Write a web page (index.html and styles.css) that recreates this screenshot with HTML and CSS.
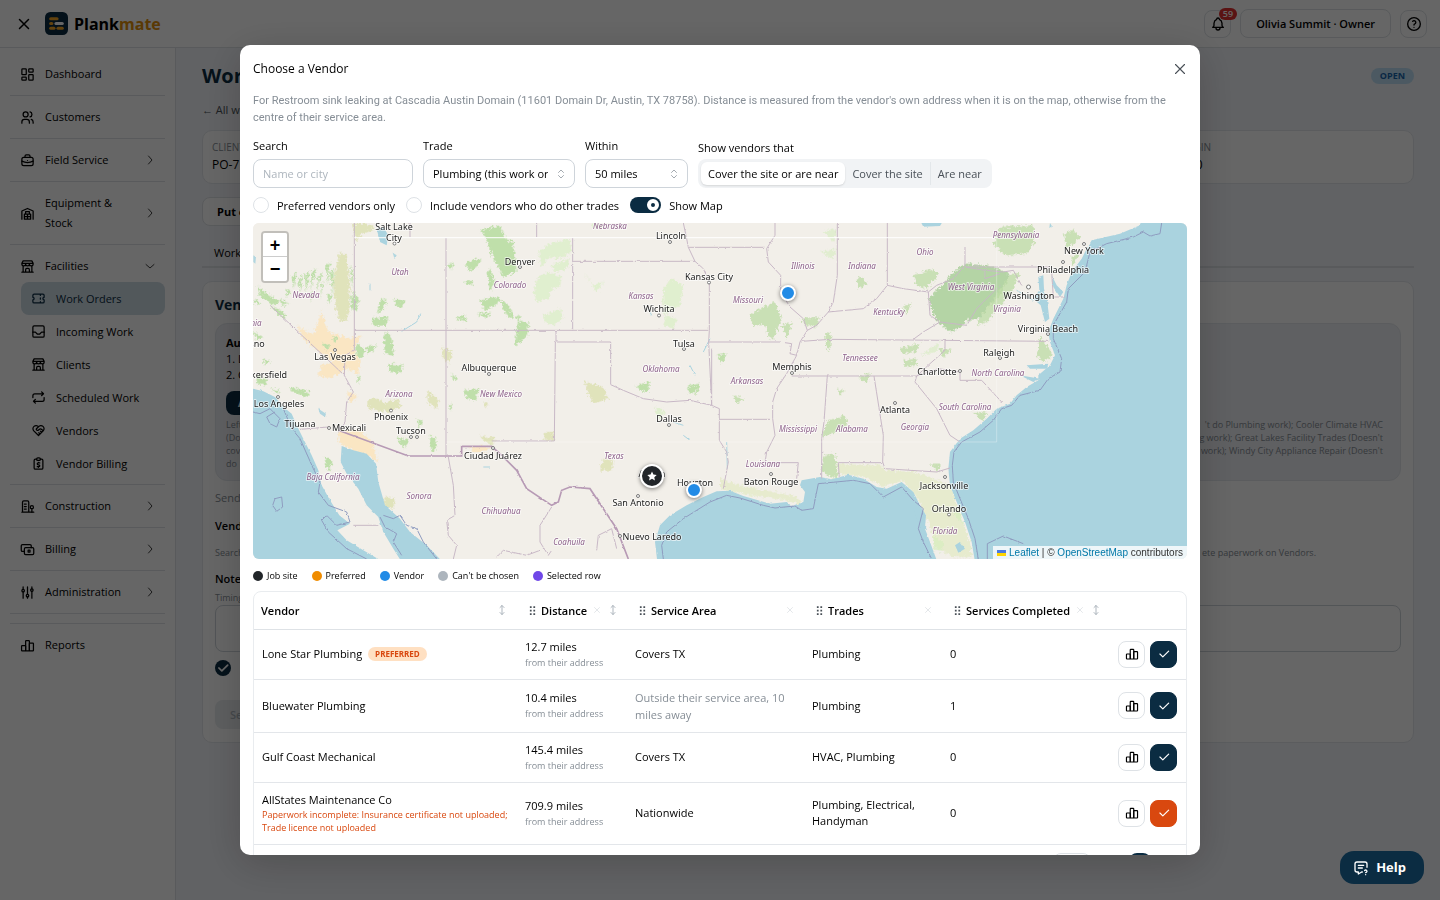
FILE: index.html
```html
<!DOCTYPE html>
<html lang="en">
<head>
<meta charset="utf-8">
<meta name="viewport" content="width=device-width, initial-scale=1">
<title>Plankmate - Work Order</title>
<link rel="stylesheet" href="styles.css">
</head>
<body>
<svg class="defs" aria-hidden="true">
  <symbol id="i-x" viewBox="0 0 24 24"><path d="M18 6 6 18M6 6l12 12"/></symbol>
  <symbol id="i-dash" viewBox="0 0 24 24"><rect x="3" y="3" width="7" height="9" rx="1"/><rect x="3" y="16" width="7" height="5" rx="1"/><rect x="14" y="12" width="7" height="9" rx="1"/><rect x="14" y="3" width="7" height="5" rx="1"/></symbol>
  <symbol id="i-users" viewBox="0 0 24 24"><circle cx="9" cy="7" r="4"/><path d="M3 21v-2a4 4 0 0 1 4-4h4a4 4 0 0 1 4 4v2M16 3.1a4 4 0 0 1 0 7.8M21 21v-2a4 4 0 0 0-3-3.9"/></symbol>
  <symbol id="i-case" viewBox="0 0 24 24"><rect x="3" y="7" width="18" height="13" rx="3"/><path d="M8 7V5a2 2 0 0 1 2-2h4a2 2 0 0 1 2 2v2M12 12v.01M3 13a20 20 0 0 0 18 0"/></symbol>
  <symbol id="i-ware" viewBox="0 0 24 24"><path d="M3 21V8l9-4 9 4v13M7 21v-8h10v8H7M7 17h10M12 13v8M9 13V9h6v4"/></symbol>
  <symbol id="i-store" viewBox="0 0 24 24"><path d="M3 21h18M3 7v1a3 3 0 0 0 6 0V7m0 1a3 3 0 0 0 6 0V7m0 1a3 3 0 0 0 6 0V7H3l2-4h14l2 4M5 21V10.9M19 21V10.9M9 21v-4a2 2 0 0 1 2-2h2a2 2 0 0 1 2 2v4"/></symbol>
  <symbol id="i-ticket" viewBox="0 0 24 24"><path d="M15 5v2M15 11v2M15 17v2M5 5h14a2 2 0 0 1 2 2v3a2 2 0 0 0 0 4v3a2 2 0 0 1-2 2H5a2 2 0 0 1-2-2v-3a2 2 0 0 0 0-4V7a2 2 0 0 1 2-2"/></symbol>
  <symbol id="i-inbox" viewBox="0 0 24 24"><rect x="3" y="3" width="18" height="18" rx="2"/><path d="M3 13h4l3 3h4l3-3h4"/></symbol>
  <symbol id="i-repeat" viewBox="0 0 24 24"><path d="M3 12V9a3 3 0 0 1 3-3h14m-3-3 3 3-3 3M21 12v3a3 3 0 0 1-3 3H4m3 3-3-3 3-3"/></symbol>
  <symbol id="i-heart" viewBox="0 0 24 24"><path d="M19.5 12.6 12 20l-7.500-7.400A5 5 0 1 1 12 6a5 5 0 1 1 7.500 6.600M12 6 8.700 9.300a1 1 0 0 0 0 1.400l.6.6a2 2 0 0 0 2.700 0l1-1a3 3 0 0 1 4.200 0l2.300 2.300M12.500 15.500l2 2M15 13l2 2"/></symbol>
  <symbol id="i-bill" viewBox="0 0 24 24"><path d="M9 5H7a2 2 0 0 0-2 2v12a2 2 0 0 0 2 2h10a2 2 0 0 0 2-2V7a2 2 0 0 0-2-2h-2"/><rect x="9" y="3" width="6" height="4" rx="2"/><path d="M14 11h-2.500a1.500 1.500 0 0 0 0 3h1a1.500 1.500 0 0 1 0 3H10M12 17v1m0-8v1"/></symbol>
  <symbol id="i-build" viewBox="0 0 24 24"><path d="M3 21h19M4 21V5a2 2 0 0 1 2-2h6a2 2 0 0 1 2 2v16M7 8h3M7 12h3M7 16h3"/><circle cx="19" cy="13" r="2.500"/><path d="M19 16v5"/></symbol>
  <symbol id="i-cash" viewBox="0 0 24 24"><rect x="7" y="9" width="15" height="11" rx="2"/><path d="M18 9V6a2 2 0 0 0-2-2H4a2 2 0 0 0-2 2v7a2 2 0 0 0 2 2h3"/><rect x="13" y="13" width="3" height="3"/></symbol>
  <symbol id="i-adj" viewBox="0 0 24 24"><circle cx="5" cy="9" r="2"/><circle cx="12" cy="17" r="2"/><circle cx="19" cy="8" r="2"/><path d="M5 3v4M5 11v10M12 3v12M12 19v2M19 3v3M19 10v11"/></symbol>
  <symbol id="i-chart" viewBox="0 0 24 24"><rect x="2.500" y="12" width="6.500" height="8.500" rx="1"/><rect x="9" y="4" width="6" height="16.500" rx="1"/><rect x="15" y="8" width="6.500" height="12.500" rx="1"/></symbol>
  <symbol id="i-right" viewBox="0 0 24 24"><path d="m9 4 7 8-7 8"/></symbol>
  <symbol id="i-down" viewBox="0 0 24 24"><path d="m4 9 8 7 8-7"/></symbol>
  <symbol id="i-bell" viewBox="0 0 24 24"><path d="M10 5a2 2 0 1 1 4 0 7 7 0 0 1 4 6v3a4 4 0 0 0 2 3H4a4 4 0 0 0 2-3v-3a7 7 0 0 1 4-6M9 17v1a3 3 0 0 0 6 0v-1"/></symbol>
  <symbol id="i-help" viewBox="0 0 24 24"><circle cx="12" cy="12" r="9.500"/><path d="M12 17v.01M12 13.500a1.500 1.500 0 0 1 1-1.500 2.600 2.600 0 1 0-3-4"/></symbol>
  <symbol id="i-check" viewBox="0 0 24 24"><path d="m5 12 5 5L20 7"/></symbol>
  <symbol id="i-updown" viewBox="0 0 24 24"><path d="m7 9 5-5 5 5M7 15l5 5 5-5"/></symbol>
  <symbol id="i-sort" viewBox="0 0 24 24"><path d="m8 7 4-4 4 4M8 17l4 4 4-4M12 3v18"/></symbol>
  <symbol id="i-grip" viewBox="0 0 8 10"><path d="M1 0h2v2H1zM5 0h2v2H5zM1 4h2v2H1zM5 4h2v2H5zM1 8h2v2H1zM5 8h2v2H5z"/></symbol>
  <symbol id="i-chat" viewBox="0 0 24 24"><path d="M8 8h8M8 12h6M14 18h-1l-5 3v-3H6a3 3 0 0 1-3-3V6a3 3 0 0 1 3-3h12a3 3 0 0 1 3 3v5M19 22v.01M19 19a2 2 0 0 0 1-3.700 2 2 0 0 0-2.500.4"/></symbol>
</svg>

<header class="topbar">
  <button class="plain" aria-label="Close menu"><svg class="ic ic-18"><use href="#i-x"/></svg></button>
  <a class="brand" href="#">
    <svg class="brand-mark" viewBox="0 0 22 22"><rect width="22" height="22" rx="5" fill="#0b2c42"/><rect x="4" y="5" width="9" height="3" rx="1.500" fill="#f5a623"/><rect x="9" y="9.500" width="9" height="3" rx="1.500" fill="#fff"/><rect x="4" y="9.500" width="4" height="3" rx="1.500" fill="#f5a623"/><rect x="4" y="14" width="6" height="3" rx="1.500" fill="#f5a623"/><rect x="11" y="14" width="7" height="3" rx="1.500" fill="#f5a623"/></svg>
    <span>Plank<span class="brand-b">mate</span></span>
  </a>
  <div class="top-actions">
    <button class="sq" aria-label="Notifications"><svg class="ic ic-16"><use href="#i-bell"/></svg><span class="count">59</span></button>
    <button class="user">Olivia Summit · Owner</button>
    <button class="sq" aria-label="Help"><svg class="ic ic-16"><use href="#i-help"/></svg></button>
  </div>
</header>

<div class="shell">
  <nav class="side">
    <a class="nav" href="#"><svg class="ic ic-15"><use href="#i-dash"/></svg><span>Dashboard</span></a>
    <a class="nav" href="#"><svg class="ic ic-15"><use href="#i-users"/></svg><span>Customers</span></a>
    <a class="nav strong" href="#"><svg class="ic ic-15"><use href="#i-case"/></svg><span>Field Service</span><svg class="ic ic-12 chev"><use href="#i-right"/></svg></a>
    <a class="nav strong" href="#"><svg class="ic ic-15"><use href="#i-ware"/></svg><span>Equipment &amp; Stock</span><svg class="ic ic-12 chev"><use href="#i-right"/></svg></a>
    <div class="nav-group">
      <a class="nav strong open" href="#"><svg class="ic ic-15"><use href="#i-store"/></svg><span>Facilities</span><svg class="ic ic-12 chev"><use href="#i-down"/></svg></a>
      <a class="sub active" href="#"><svg class="ic ic-15"><use href="#i-ticket"/></svg>Work Orders</a>
      <a class="sub" href="#"><svg class="ic ic-15"><use href="#i-inbox"/></svg>Incoming Work</a>
      <a class="sub" href="#"><svg class="ic ic-15"><use href="#i-store"/></svg>Clients</a>
      <a class="sub" href="#"><svg class="ic ic-15"><use href="#i-repeat"/></svg>Scheduled Work</a>
      <a class="sub" href="#"><svg class="ic ic-15"><use href="#i-heart"/></svg>Vendors</a>
      <a class="sub" href="#"><svg class="ic ic-15"><use href="#i-bill"/></svg>Vendor Billing</a>
    </div>
    <a class="nav strong" href="#"><svg class="ic ic-15"><use href="#i-build"/></svg><span>Construction</span><svg class="ic ic-12 chev"><use href="#i-right"/></svg></a>
    <a class="nav strong" href="#"><svg class="ic ic-15"><use href="#i-cash"/></svg><span>Billing</span><svg class="ic ic-12 chev"><use href="#i-right"/></svg></a>
    <a class="nav strong" href="#"><svg class="ic ic-15"><use href="#i-adj"/></svg><span>Administration</span><svg class="ic ic-12 chev"><use href="#i-right"/></svg></a>
    <a class="nav last" href="#"><svg class="ic ic-15"><use href="#i-chart"/></svg><span>Reports</span></a>
  </nav>

  <main class="page">
    <div class="page-head"><h1>Work Order</h1><span class="pill-open">OPEN</span></div>
    <a class="back" href="#">← All work orders</a>
    <section class="card facts">
      <div><span class="cap">CLIENT PO</span><span class="val">PO-7</span></div><div></div><div></div><div></div>
      <div><span class="cap">MARGIN</span><span class="val">$0.00</span></div>
    </section>
    <button class="hold">Put on hold</button>
    <div class="tabs"><a href="#">Work</a></div>
    <section class="card vend">
      <h2>Vendor</h2>
      <div class="auto">
        <strong>Auto</strong>
        <span>1. L</span>
        <span>2. C</span>
        <button class="mini">A</button>
        <p class="fine"><span>Left out</span><span>'t do Plumbing work); Cooler Climate HVAC</span></p>
        <p class="fine"><span>(Doesn't</span><span>g work); Great Lakes Facility Trades (Doesn't</span></p>
        <p class="fine"><span>cover</span><span>work); Windy City Appliance Repair (Doesn't</span></p>
        <p class="fine"><span>do</span></p>
      </div>
      <p class="send">Send</p>
      <p class="lab">Vendor</p>
      <p class="fine search-note"><span>Search</span><span>ete paperwork on Vendors.</span></p>
      <label class="lab" for="note">Notes</label>
      <p class="fine timing">Timing</p>
      <textarea id="note" class="note"></textarea>
      <span class="tick"><input type="checkbox" checked aria-label="Notify vendor"><svg class="ic ic-14"><use href="#i-check"/></svg></span>
      <button class="send-btn" disabled>Send</button>
    </section>
  </main>
</div>

<div class="overlay">
<div class="dialog" role="dialog" aria-modal="true" aria-labelledby="dlg-title">
  <div class="dlg-head"><h2 id="dlg-title">Choose a Vendor</h2><button class="plain grey" aria-label="Close"><svg class="ic ic-18"><use href="#i-x"/></svg></button></div>
  <p class="intro">For Restroom sink leaking at Cascadia Austin Domain (11601 Domain Dr, Austin, TX 78758). Distance is measured from the vendor's own address when it is on the map, otherwise from the centre of their service area.</p>

  <div class="filters">
    <div class="field w-search"><label for="q">Search</label><input id="q" type="text" placeholder="Name or city"></div>
    <div class="field w-trade"><label for="trade">Trade</label><div class="sel"><select id="trade"><option>Plumbing (this work order)</option></select><svg class="ic ic-12"><use href="#i-updown"/></svg></div></div>
    <div class="field w-within"><label for="within">Within</label><div class="sel"><select id="within"><option>50 miles</option></select><svg class="ic ic-12"><use href="#i-updown"/></svg></div></div>
    <fieldset class="seg-field"><legend>Show vendors that</legend>
      <div class="seg">
        <label><input type="radio" name="cov" checked><span>Cover the site or are near</span></label>
        <label><input type="radio" name="cov"><span>Cover the site</span></label>
        <label><input type="radio" name="cov"><span>Are near</span></label>
      </div>
    </fieldset>
  </div>
  <div class="toggles">
    <label><input class="round" type="checkbox">Preferred vendors only</label>
    <label><input class="round" type="checkbox">Include vendors who do other trades</label>
    <label><input class="switch" type="checkbox" role="switch" checked>Show Map</label>
  </div>

  <div class="map">
    <svg class="map-svg" viewBox="253 223 934 336" preserveAspectRatio="xMidYMid slice" role="img" aria-label="Vendor map">
      <defs>
        <filter id="rough" x="-5%" y="-5%" width="110%" height="110%"><feTurbulence type="fractalNoise" baseFrequency=".12" numOctaves="3" seed="4"/><feDisplacementMap in="SourceGraphic" scale="20" xChannelSelector="R" yChannelSelector="G"/></filter>
        <filter id="coast" x="-5%" y="-5%" width="110%" height="110%"><feTurbulence type="fractalNoise" baseFrequency=".08" numOctaves="2" seed="9"/><feDisplacementMap in="SourceGraphic" scale="7" xChannelSelector="R" yChannelSelector="G"/></filter>
      </defs>
      <rect x="253" y="223" width="934" height="336" fill="#f2efe9"/>
      <g transform="translate(250 222) scale(.33333)">
        <g filter="url(#rough)" opacity=".9">
          <g fill="#fbe3b6">
            <path d="M140 310 190 340 215 265 235 330 300 350 335 340 310 380 330 420 325 455 290 440 240 470 205 460 215 430 250 420 200 385 160 350zM265 625 330 625 365 660 385 720 350 700 310 685 268 665zM290 510 325 520 300 545zM660 675 715 670 710 688 670 690z" opacity=".85"/>
          </g>
          <g fill="#d6dca0">
            <path d="M268 90 290 100 300 200 295 290 270 300 258 260 250 180zM305 5 350 5 375 20 330 40 320 60zM690 640 735 650 728 670 705 660zM1005 480 1060 495 1075 530 1030 545 1015 515zM880 630 912 630 912 656 885 652zM1060 710 1090 715 1085 745 1050 745zM405 825 435 830 430 860 400 855zM355 530 385 530 400 545 440 530 455 555 415 570 355 560zM530 505 565 530 560 560 535 545zM700 540 715 540 710 560zM575 375 605 390 600 425 580 410z" opacity=".7"/>
          </g>
          <g fill="#b9dda3">
            <path d="M690 25 750 10 770 55 790 60 800 150 760 165 730 110 705 45zM645 125 675 110 695 115 660 150zM710 150 720 140 735 180 720 210zM615 290 640 275 655 300zM690 235 740 225 780 255 790 290 770 280 750 240 705 265zM810 295 835 305 830 345 795 370 800 320zM640 505 690 500 675 535 650 530zM680 275 720 272 710 290zM800 280 815 285 800 300zM640 180 670 175 665 190zM590 130 610 120 605 145zM410 330 425 350 430 400 405 395 400 350zM415 425 460 430 450 455 420 450zM325 455 332 480 322 480zM345 375 380 370 360 395zM120 495 180 510 170 525 125 510zM20 460 50 470 45 490 20 485zM60 500 90 505 80 515zM225 705 248 715 240 745 225 730zM595 550 606 545 604 565zM605 455 620 470 610 480zM300 220 325 230 320 265 305 260zM250 340 262 350 252 365zM390 235 410 230 400 260 380 275zM435 230 465 240 455 255 435 250zM365 290 415 285 410 310 370 312zM320 365 345 385 335 410 318 400zM215 360 240 372 230 385zM500 590 520 600 505 620zM440 645 480 655 460 680zM540 640 560 650 555 690 540 680z"/>
            <path d="M125 165 140 150 130 200zM145 175 158 160 150 210zM165 160 178 145 168 215zM185 150 198 140 182 205zM205 165 218 150 200 210zM228 130 240 120 232 190zM215 185 222 180 210 230zM240 150 252 140 248 220zM110 200 122 210 108 225zM300 130 310 150 308 200zM180 215 190 205 182 240zM232 215 245 220 236 250zM310 200 322 230 315 270zM20 190 45 210 90 240 70 250 30 220zM60 250 100 270 110 290 80 275zM10 230 30 240 20 250zM10 330 40 345 20 355zM90 230 115 245 95 252zM40 410 60 420 45 430z"/>
          </g>
          <g fill="#cdeeb3">
            <path d="M865 90 900 65 960 50 965 90 930 110 900 105 875 135zM865 165 895 150 935 165 930 195 905 200 895 230 860 240 850 210zM880 280 930 260 940 290 910 310 885 300zM900 130 960 110 950 140 920 150zM1240 200 1265 170 1300 190 1290 250 1240 280zM1250 280 1280 290 1270 320 1240 310zM1000 150 1030 190 1060 180 1040 210zM1025 5 1060 5 1060 20 1030 18zM1215 555 1245 565 1235 590 1220 580z" opacity=".55"/>
          </g>
          <g transform="translate(1410 0)" fill="#b9d9a0">
            <path fill="#add19e" d="M625 230 660 195 700 150 735 125 800 130 850 145 870 160 840 220 800 260 780 290 740 295 720 320 690 330 645 290z"/>
            <path d="M840 15 940 10 945 60 920 95 860 100 820 70zM870 160 900 150 880 200 850 240 800 300 770 310 790 270zM1030 40 1060 20 1080 50 1040 80zM580 160 640 140 655 160 620 200 590 190zM410 170 430 165 440 185 415 200zM90 280 120 260 165 240 185 290 160 350 145 345 140 310 100 310zM185 310 220 300 200 350zM240 290 300 285 290 315 260 310zM315 330 335 335 330 385 318 375zM540 380 600 365 590 390 545 395zM550 415 590 410 590 430 555 435zM655 380 695 380 670 410zM415 465 450 455 440 485zM0 405 18 410 0 425zM325 595 375 580 385 605 330 640 305 640zM310 700 345 695 355 770 330 765 305 745zM760 570 800 570 790 600zM630 725 660 725 655 750zM40 520 75 530 50 545zM960 340 1000 400 970 420 950 400zM1050 110 1080 90 1060 130zM545 260 575 240 560 275zM350 500 375 505 360 520z" opacity=".8"/>
            <path fill="#dfe9bb" d="M350 725 480 730 500 745 590 750 640 770 690 790 720 880 750 960 755 1005 700 1005 650 980 625 900 600 840 550 775 490 795 430 765 360 755zM0 770 60 790 160 810 230 825 250 850 200 835 60 815 0 800z" opacity=".65"/>
            <path fill="#cdeeb3" d="M640 940 670 960 665 990 640 985zM700 860 720 870 735 910 710 890zM300 90 350 80 340 110zM310 30 350 20 340 60zM600 400 660 360 650 390z" opacity=".5"/>
          </g>
          <path transform="translate(-150 0)" fill="#b9dda3" d="M1550 400 1580 395 1570 420zM1310 490 1350 480 1345 510 1320 505zM1465 490 1500 485 1490 515 1465 510z"/>
        </g>

        <g filter="url(#coast)">
          <g fill="#aad3df">
            <path d="M0 498 40 508 75 525 100 555 125 575 140 610 160 650 185 700 205 745 215 790 240 835 268 880 300 905 262 925 290 955 340 985 400 1020H0z"/>
            <path d="M275 672 310 685 350 695 378 725 385 780 405 850 450 890 480 930 530 970 578 1020H455L430 980 400 930 385 885 350 850 325 800 290 755 272 720z"/>
            <path d="M1222 1020 1215 960 1230 910 1260 880 1310 850 1360 825 1400 808 1440 806 1480 822 1560 845 1610 840 1625 852 1660 840 1665 810 1650 790 1655 775 1710 765 1745 772 1795 758 1840 770 1880 795 1910 800 1955 780 1990 810 2010 850 2028 880 2025 920 2040 960 2062 1020z"/>
            <path d="M2175 1020 2165 960 2145 900 2120 840 2100 790 2095 740 2100 690 2130 650 2170 625 2210 590 2240 560 2280 545 2300 520 2330 495 2365 475 2365 460 2400 430 2415 400 2400 360 2395 330 2410 290 2440 230 2450 190 2465 150 2495 110 2510 80 2525 55 2610 35 2670 10 2675-10H2830V1020z"/>
            <path d="M2010-5H2080L2070 12 2020 14zM380 20 400 15 415 40 410 70 390 60zM2400 3l6 10-8 5z"/>
            <path d="M2365 165 2380 160 2382 200 2392 240 2398 290 2385 300 2372 250 2350 230 2368 205zM2405 160 2420 190 2440 210 2430 225 2410 195zM2330 430 2395 425 2390 440 2340 440zM2310 460 2370 470 2350 480zM2115 970 2130 960 2145 980 2125 992z"/>
            <path d="M10 100 18 105 16 125 10 120zM205 560 228 575 225 585 210 575zM428 92 440 100 434 112z" opacity=".9"/>
          </g>
          <path class="river" d="M455 328 500 300 512 275M360 185v20M1320 430l15 30M1360 390l20-40M1195 260l10 20M1270 600l30 10M1300 640l20 15M700 735h20M2350 235 2300 205M1430 660 1432 740M1990 860l20 60"/>
        </g>
        <g class="offshore" filter="url(#coast)">
          <path d="M9 570 30 575 60 560 90 590 80 615 60 605 50 585 75 570M100 560 125 620 150 650 190 740 210 780 205 810 235 850 290 870 300 900 260 910 230 880 215 895 235 930 290 980 350 1011M75 830 95 825 98 855 80 868 68 850zM390 885 405 915 440 935 430 960 455 1000M400 880 430 890 450 880 470 910 500 920 520 960 560 1011"/>
          <path d="M1240 1011 1235 970 1250 930 1300 890 1380 840 1430 820 1470 828 1540 850 1575 858 1635 852 1655 865 1690 860 1705 785 1810 775 1860 785 1900 825 1955 795 1990 835 2020 860 2005 920 2020 960 2045 1011M2185 1011 2175 950 2155 890 2130 830 2110 780 2107 730 2112 690 2135 660 2190 630 2230 595 2255 560 2285 550 2310 520 2370 505 2395 470 2430 450 2435 410 2410 350 2410 310 2450 240 2455 200 2505 150 2520 90 2570 65 2650 45 2680 30 2700 42 2730 35 2735 3M2212 1011 2212 965 2260 942 2320 965"/>
        </g>
        <g class="state" filter="url(#coast)">
          <path d="M313 3V325M313 325H1375M588 48V700M313 325V385L285 400 283 460 310 510 290 540 285 600 265 625M60 250 283 460M480 45V3M860 3V45M968 48V325M970 118H1335L1360 140 1378 180V325L1376 360H1590M918 325V360M916 360 913 657H725M916 360H1082V488L1120 505 1180 530 1250 540 1320 535 1385 550V380M1376 360 1385 550 1408 560V655L1430 690 1435 720 1420 800M1408 592H1560M1300 3 1308 40 1315 76H1545M1315 76 1335 118M1575 3 1575 40 1550 80 1555 120 1592 160 1592 210 1620 255 1660 290 1672 325 1650 360 1640 400 1610 455 1580 500 1568 540 1568 590 1575 640 1550 690 1545 722H1645L1640 770M1762 3V160L1750 240 1735 270 1700 310 1672 325M1912 3V190L1880 230 1840 260 1735 270M1912 190 1960 200 2035 210 2060 190 2110 170 2145 130V75M2145 135H2400M2145 135 2205 145 2260 150 2290 145 2315 190M2205 145V170L2250 155M2035 210 2040 280 2070 300 2020 330 1990 352M1655 358 1740 352 2075 355 2395 358M1605 362 1625 365 1620 395 1640 400M1625 462H2000L2040 425 2085 385 2085 355M1732 462 1722 600 1715 650V770M1872 462 1900 640 1898 720 1905 740 2060 750 2100 738M1898 722H1765L1768 768M2000 462 1995 480 2060 560 2100 640 2130 660M2000 462 2065 440 2130 450V475H2195L2255 540M2070 300 2150 310 2180 260 2250 190M2405 150 2410 225H2445M150 622 235 615M310 910H385"/>
          <path d="M595 705 610 790 615 880 590 895 595 940 620 970 610 1011M905 855 870 910 870 960 895 1000 905 985M740 1005 760 985 830 1000 870 985M1040 985 1045 940 1085 920 1100 980"/>
        </g>
        <path class="country" filter="url(#coast)" d="M265 625 475 702H635V673H725L755 700 800 745 830 800 905 850 925 840 935 805 960 795 1020 800 1060 860 1100 920 1135 1011"/>
        <path d="M313 47H2290" stroke="#fff" stroke-width="4" opacity=".8"/>
        <path d="M590 660H2240V47" stroke="#fff" stroke-width="3" opacity=".3" fill="none"/>
      </g>
      <g class="town">
        <circle cx="394.500" cy="243.500" r="1.500"/><circle cx="520" cy="267" r="1.500"/><circle cx="670" cy="242" r="1.500"/><circle cx="709" cy="282.500" r="1.500"/><circle cx="659" cy="315.500" r="1.500"/><circle cx="335" cy="350" r="1.500"/><circle cx="684" cy="349" r="1.500"/><circle cx="489" cy="374" r="1.500"/><circle cx="278" cy="397" r="1.500"/><circle cx="391" cy="410.500" r="1.500"/><circle cx="329" cy="428" r="1.500"/><circle cx="411" cy="437" r="1.500"/><circle cx="417" cy="437" r="1.500"/><circle cx="669" cy="425" r="1.500"/><circle cx="493" cy="448" r="1.500"/><circle cx="638" cy="496" r="1.500"/><circle cx="620" cy="536" r="1.500"/><circle cx="792" cy="373" r="1.500"/><circle cx="895" cy="403" r="1.500"/><circle cx="771" cy="474" r="1.500"/><circle cx="945" cy="477" r="1.500"/><circle cx="949" cy="514.500" r="1.500"/><circle cx="960" cy="371" r="1.500"/><circle cx="1000" cy="358" r="1.500"/><circle cx="1048" cy="334" r="1.500"/><circle cx="1084" cy="244" r="1.500"/><circle cx="1063" cy="262" r="1.500"/><circle cx="1028.500" cy="287" r="2"/>
      </g>
      <g class="region">
        <text x="306" y="298">Nevada</text><text x="400" y="275">Utah</text><text x="510" y="288">Colorado</text><text x="641" y="299">Kansas</text><text x="610" y="229">Nebraska</text><text x="399" y="397">Arizona</text><text x="501" y="397">New Mexico</text><text x="661" y="372">Oklahoma</text><text x="614" y="459">Texas</text><text x="333" y="480">Baja California</text><text x="419" y="499">Sonora</text><text x="501" y="514">Chihuahua</text><text x="569" y="545">Coahuila</text><text x="256" y="326">nia</text>
        <text x="748" y="303">Missouri</text><text x="803" y="269">Illinois</text><text x="862" y="269">Indiana</text><text x="925" y="255">Ohio</text><text x="1016" y="238">Pennsylvania</text><text x="971" y="290">West Virginia</text><text x="1007" y="312">Virginia</text><text x="889" y="315">Kentucky</text><text x="860" y="361">Tennessee</text><text x="747" y="384">Arkansas</text><text x="998" y="376">North Carolina</text><text x="965" y="410">South Carolina</text><text x="915" y="430">Georgia</text><text x="852" y="432">Alabama</text><text x="798" y="432">Mississippi</text><text x="763" y="467">Louisiana</text><text x="945" y="534">Florida</text>
      </g>
      <g class="city">
        <text x="394" y="230">Salt Lake</text><text x="394" y="241">City</text><text x="520" y="265">Denver</text><text x="671" y="239">Lincoln</text><text x="709" y="280">Kansas City</text><text x="659" y="312">Wichita</text><text x="684" y="347">Tulsa</text><text x="335" y="360">Las Vegas</text><text x="257" y="347">sno</text><text x="269" y="378">kersfield</text><text x="279" y="407">Los Angeles</text><text x="300" y="427">Tijuana</text><text x="349" y="431">Mexicali</text><text x="391" y="420">Phoenix</text><text x="411" y="434">Tucson</text><text x="489" y="371">Albuquerque</text><text x="669" y="422">Dallas</text><text x="493" y="459">Ciudad Juárez</text><text x="652" y="477">Austin</text><text x="695" y="486">Houston</text><text x="638" y="506">San Antonio</text><text x="652" y="540">Nuevo Laredo</text><text x="792" y="370">Memphis</text><text x="895" y="413">Atlanta</text><text x="771" y="485">Baton Rouge</text><text x="944" y="489">Jacksonville</text><text x="949" y="512">Orlando</text><text x="937" y="375">Charlotte</text><text x="999" y="356">Raleigh</text><text x="1048" y="332">Virginia Beach</text><text x="1029" y="299">Washington</text><text x="1063" y="273">Philadelphia</text><text x="1084" y="254">New York</text>
      </g>
      <g class="pins">
        <circle cx="788" cy="293" r="7" fill="#228be6"/><circle cx="694" cy="490" r="7" fill="#228be6"/>
        <circle cx="652" cy="476" r="11" fill="#212529"/><path d="m652 471.500 1.400 3 3.300.4-2.400 2.300.6 3.200-2.900-1.600-2.900 1.600.6-3.200-2.400-2.300 3.300-.4z" fill="#fff" stroke="none"/>
      </g>
    </svg>
    <div class="zoomer"><button aria-label="Zoom in">+</button><button aria-label="Zoom out">−</button></div>
    <div class="attrib"><svg viewBox="0 0 12 8"><path fill="#4c7be1" d="M0 0h12v4H0z"/><path fill="#ffd500" d="M0 4h12v4H0z"/></svg> <a href="#">Leaflet</a> | © <a href="#">OpenStreetMap</a> contributors</div>
  </div>

  <ul class="key">
    <li><i class="k-site"></i>Job site</li><li><i class="k-pref"></i>Preferred</li><li><i class="k-vend"></i>Vendor</li><li><i class="k-no"></i>Can't be chosen</li><li><i class="k-sel"></i>Selected row</li>
  </ul>

  <div class="grid">
    <table>
      <colgroup><col class="c1"><col class="c2"><col class="c3"><col class="c4"><col class="c5"><col class="c6"></colgroup>
      <thead><tr>
        <th><div class="th"><span class="grow">Vendor</span><svg class="ic ic-12 mute"><use href="#i-sort"/></svg></div></th>
        <th><div class="th drag"><svg class="grip"><use href="#i-grip"/></svg><span>Distance</span><svg class="ic ic-10 faint"><use href="#i-x"/></svg><svg class="ic ic-12 mute"><use href="#i-sort"/></svg></div></th>
        <th><div class="th drag"><svg class="grip"><use href="#i-grip"/></svg><span class="grow">Service Area</span><svg class="ic ic-10 faint"><use href="#i-x"/></svg></div></th>
        <th><div class="th drag"><svg class="grip"><use href="#i-grip"/></svg><span class="grow">Trades</span><svg class="ic ic-10 faint"><use href="#i-x"/></svg></div></th>
        <th><div class="th drag"><svg class="grip"><use href="#i-grip"/></svg><span>Services Completed</span><svg class="ic ic-10 faint"><use href="#i-x"/></svg><svg class="ic ic-12 mute"><use href="#i-sort"/></svg></div></th>
        <th></th>
      </tr></thead>
      <tbody>
        <tr>
          <td><div class="name">Lone Star Plumbing <span class="pref">PREFERRED</span></div></td>
          <td>12.7 miles<small>from their address</small></td><td>Covers TX</td><td>Plumbing</td><td>0</td>
          <td><div class="acts"><button class="act" aria-label="Vendor stats"><svg class="ic ic-14"><use href="#i-chart"/></svg></button><button class="act go" aria-label="Choose"><svg class="ic ic-14"><use href="#i-check"/></svg></button></div></td>
        </tr>
        <tr>
          <td><div class="name">Bluewater Plumbing</div></td>
          <td>10.4 miles<small>from their address</small></td><td class="dim">Outside their service area, 10 miles away</td><td>Plumbing</td><td>1</td>
          <td><div class="acts"><button class="act" aria-label="Vendor stats"><svg class="ic ic-14"><use href="#i-chart"/></svg></button><button class="act go" aria-label="Choose"><svg class="ic ic-14"><use href="#i-check"/></svg></button></div></td>
        </tr>
        <tr>
          <td><div class="name">Gulf Coast Mechanical</div></td>
          <td>145.4 miles<small>from their address</small></td><td>Covers TX</td><td>HVAC, Plumbing</td><td>0</td>
          <td><div class="acts"><button class="act" aria-label="Vendor stats"><svg class="ic ic-14"><use href="#i-chart"/></svg></button><button class="act go" aria-label="Choose"><svg class="ic ic-14"><use href="#i-check"/></svg></button></div></td>
        </tr>
        <tr>
          <td><div class="name">AllStates Maintenance Co</div><div class="warn">Paperwork incomplete: Insurance certificate not uploaded; Trade licence not uploaded</div></td>
          <td>709.9 miles<small>from their address</small></td><td>Nationwide</td><td>Plumbing, Electrical, Handyman</td><td>0</td>
          <td><div class="acts"><button class="act" aria-label="Vendor stats"><svg class="ic ic-14"><use href="#i-chart"/></svg></button><button class="act go alert" aria-label="Choose"><svg class="ic ic-14"><use href="#i-check"/></svg></button></div></td>
        </tr>
      </tbody>
    </table>
    <div class="pager"><button class="size" aria-label="Rows per page"></button><button class="pg" aria-label="Page 1"></button></div>
  </div>
</div>
</div>

<button class="help-fab"><svg class="ic ic-16"><use href="#i-chat"/></svg>Help</button>
</body>
</html>
```

FILE: styles.css
```css
* { box-sizing: border-box; }
body {
  margin: 0;
  height: 100vh;
  overflow: hidden;
  background: #f3f5f9;
  color: #000;
  font: 11px/17px "Open Sans", "Noto Sans", sans-serif;
}
h1, h2, p, ul, fieldset { margin: 0; padding: 0; border: 0; }
a { color: inherit; text-decoration: none; }
button, input, select, textarea { font: inherit; color: inherit; margin: 0; }
button { padding: 0; background: #fff; border: 1px solid #dee2e6; border-radius: 8px; }

.defs { position: absolute; width: 0; height: 0; }
.ic { flex: none; display: block; fill: none; stroke: currentColor; stroke-width: 2; stroke-linecap: round; stroke-linejoin: round; }
.ic-10 { width: 10px; height: 10px; }
.ic-12 { width: 12px; height: 12px; }
.ic-14 { width: 14px; height: 14px; }
.ic-15 { width: 15px; height: 15px; }
.ic-16 { width: 16px; height: 16px; }
.ic-18 { width: 18px; height: 18px; }
.chev { stroke-width: 1.5; }
.plain { background: none; border: 0; }
.grey { color: #495057; }
.grey svg { stroke-width: 1.5; }

/* Top bar */
.topbar { display: flex; align-items: center; height: 48px; padding: 0 13px 0 15px; background: #fff; border-bottom: 1px solid #dee2e6; }
.brand { display: flex; align-items: center; gap: 6px; margin-left: 12px; font-size: 16px; font-weight: 700; line-height: 24px; }
.brand-b { color: #e08e0b; }
.brand-mark { width: 23px; height: 23px; }
.top-actions { display: flex; align-items: center; gap: 9px; margin-left: auto; }
.sq { position: relative; display: grid; place-items: center; width: 27px; height: 28px; }
.count { position: absolute; top: -3px; right: -7px; padding: 0 4px; border-radius: 8px; background: #e03131; color: #fff; font-size: 9px; line-height: 12px; font-weight: 600; }
.user { height: 29px; padding: 0 15px; font-weight: 600; }

/* Sidebar */
.shell { display: flex; height: calc(100vh - 48px); }
.side { flex: none; width: 176px; padding: 5px 10px; background: #fff; border-right: 1px solid #dee2e6; }
.nav { display: flex; align-items: center; gap: 10px; min-height: 43px; padding: 0 9px 0 10px; border-bottom: 1px solid #dee2e6; line-height: 20px; }
.nav span { flex: 1; }
.nav.strong { font-weight: 500; }
.nav:nth-child(4) { min-height: 63px; }
.nav.open { border: 0; min-height: 37px; padding-top: 5px; }
.nav.last { margin-top: 9px; border-top: 1px solid #dee2e6; border-bottom: 0; }
.nav-group { padding-bottom: 4px; border-bottom: 1px solid #dee2e6; }
.sub { display: flex; align-items: center; gap: 10px; height: 33px; margin-left: 11px; padding-left: 10px; border-radius: 8px; }
.sub.active { background: #cddbe4; color: #0b2c42; }

/* Page */
.page { flex: 1; min-width: 0; padding: 14px 26px; display: flex; flex-direction: column; align-items: stretch; }
.page-head { display: flex; justify-content: space-between; align-items: center; }
.page-head h1 { font-size: 20px; line-height: 27px; color: #0b2c42; }
.pill-open { padding: 0 9px; border-radius: 8px; background: #bfdff5; color: #1864ab; font-size: 9px; line-height: 16px; font-weight: 700; }
.back { margin-top: 12px; color: #495057; }
.card { background: #fff; border: 1px solid #e3e7ec; border-radius: 10px; }
.facts { display: grid; grid-template-columns: repeat(5, 1fr); gap: 8px; margin-top: 12px; padding: 8px 9px 9px; }
.facts span { display: block; }
.cap { font-size: 10px; color: #868e96; }
.val { font-size: 12px; line-height: 18px; }
.hold { align-self: flex-start; height: 29px; margin-top: 13px; padding: 0 14px; font-weight: 700; }
.tabs { padding: 18px 12px 5px; border-bottom: 2px solid #dee2e6; }
.vend { display: flex; flex-direction: column; align-items: stretch; margin-top: 13px; padding: 13px 12px; }
.vend h2 { font-size: 14px; line-height: 20px; color: #0b2c42; }
.auto { display: flex; flex-direction: column; margin-top: 8px; padding: 11px 17px 10px 10px; line-height: 16px; background: #eef0f4; border: 1px solid #e3e7ec; border-radius: 12px; }
.mini { align-self: flex-start; width: 90px; height: 24px; margin: 8px 0 3px; padding-left: 12px; text-align: left; background: #0b2c42; color: #fff; border: 0; font-weight: 700; }
.fine { display: flex; justify-content: space-between; font-size: 9px; line-height: 13px; color: #868e96; }
.send { margin-top: 8px; color: #868e96; }
.lab { margin-top: 11px; font-weight: 600; }
.search-note { margin: 12px 85px 0 0; }
.timing { margin: 4px 0 1px; }
.note { height: 47px; border: 1px solid #ced4da; border-radius: 8px; resize: none; }
.tick { position: relative; display: block; width: 16px; height: 16px; margin-top: 8px; color: #fff; }
.tick input { appearance: none; display: block; width: 16px; height: 16px; border-radius: 50%; background: #0b2c42; }
.tick svg { position: absolute; inset: 1px; stroke-width: 3; }
.send-btn { align-self: flex-start; width: 90px; height: 29px; margin-top: 24px; padding-left: 15px; text-align: left; background: #e9ecef; border: 0; color: #adb5bd; font-weight: 600; }

/* Dialog */
.overlay { position: fixed; inset: 0; display: flex; justify-content: center; align-items: center; background: rgba(0, 0, 0, .6); }
.dialog { width: 960px; max-width: 90vw; height: 90vh; overflow: hidden; padding: 13px; background: #fff; border-radius: 10px; box-shadow: 0 8px 40px rgba(0, 0, 0, .2); }
.dlg-head { display: flex; justify-content: space-between; align-items: center; }
.dlg-head h2 { font-size: 12px; line-height: 22px; font-weight: 400; }
.dlg-head .plain { margin-right: -2px; }
.intro { margin-top: 12px; color: #868e96; font-family: Roboto, "Open Sans", sans-serif; }
.filters { display: flex; align-items: flex-end; gap: 10px; margin-top: 11px; }
.field label, .seg-field legend { display: block; font-weight: 500; line-height: 17px; padding: 0; }
.field input, .field select { display: block; width: 100%; height: 29px; margin-top: 5px; padding: 0 9px; background: #fff; border: 1px solid #ced4da; border-radius: 8px; outline: 0; }
.field input::placeholder { color: #adb5bd; }
.w-search { width: 160px; }
.w-trade { width: 152px; }
.w-within { width: 103px; }
.sel { position: relative; }
.sel select { appearance: none; padding-right: 26px; text-overflow: clip; overflow: hidden; }
.sel svg { position: absolute; right: 8px; top: 9px; color: #868e96; stroke-width: 1.5; }
.seg { display: flex; height: 29px; margin-top: 3px; padding: 3px; background: #f1f3f5; border-radius: 8px; }
.seg label { display: flex; align-items: center; padding: 0 7px; border-radius: 6px; font-weight: 500; color: #495057; }
.seg label:has(:checked) { background: #fff; color: #000; box-shadow: 0 1px 2px rgba(0, 0, 0, .12); }
.seg label + label + label { border-left: 1px solid #e3e7ea; border-radius: 0; }
.seg input { position: absolute; opacity: 0; }
.toggles { display: flex; gap: 11px; height: 16px; margin: 9px 0 10px; }
.toggles label { display: flex; align-items: center; gap: 8px; }
.round { appearance: none; width: 16px; height: 16px; border: 1px solid #dee2e6; border-radius: 50%; }
.switch { appearance: none; display: flex; justify-content: flex-end; align-items: center; width: 31px; height: 16px; padding: 2px; border-radius: 8px; background: #0b2c42; }
.switch::before { content: ""; box-sizing: border-box; width: 12px; height: 12px; border: 4px solid #fff; border-radius: 50%; }

/* Map */
.map { position: relative; height: 336px; overflow: hidden; border-radius: 6px; background: #f2efe9; }
.map-svg { display: block; width: 100%; height: 100%; }
.map-svg text { text-anchor: middle; font-family: "Noto Sans", sans-serif; paint-order: stroke; stroke: rgba(255, 255, 255, .6); stroke-width: 2px; stroke-linejoin: round; }
.city text { font-size: 9px; fill: #222; }
.region text { font-size: 8px; font-style: italic; fill: #8d618b; }
.town circle { fill: #fff; stroke: #777; stroke-width: 1; }
.state path { fill: none; stroke: #c8b8c6; stroke-width: 3; }
.country { fill: none; stroke: #b79ab5; stroke-width: 5; }
.offshore path { fill: none; stroke: #8f9cc0; stroke-width: 3; }
.river { fill: none; stroke: #aad3df; stroke-width: 3; }
.pins { filter: drop-shadow(0 1px 2px rgba(0, 0, 0, .5)); stroke: #fff; stroke-width: 2; }
.zoomer { position: absolute; left: 8px; top: 8px; display: flex; flex-direction: column; border: 2px solid rgba(0, 0, 0, .2); border-radius: 4px; background-clip: padding-box; }
.zoomer button { width: 24px; height: 24px; border: 0; border-radius: 0 0 2px 2px; font: 700 18px/24px "Liberation Sans", sans-serif; }
.zoomer button:first-child { border-bottom: 1px solid #ccc; border-radius: 2px 2px 0 0; }
.attrib { position: absolute; right: 0; bottom: 0; padding: 0 4px; background: rgba(255, 255, 255, .8); color: #333; font: 10px/13px "Liberation Sans", sans-serif; }
.attrib a { color: #0078a8; }
.attrib svg { width: 9px; height: 6px; }

.key { display: flex; gap: 14px; margin-top: 9px; list-style: none; font-size: 9px; line-height: 16px; }
.key li { display: flex; align-items: center; gap: 4px; }
.key i { width: 10px; height: 10px; border-radius: 50%; }
.k-site { background: #212529; }
.k-pref { background: #f08c00; }
.k-vend { background: #228be6; }
.k-no { background: #adb5bd; }
.k-sel { background: #7048e8; }

/* Vendor table */
.grid { margin-top: 7px; border: 1px solid #e9ecef; border-radius: 8px; }
table { width: 100%; border-collapse: collapse; table-layout: fixed; }
.c2 { width: 110px; }
.c3 { width: 177px; }
.c4 { width: 138px; }
.c5 { width: 165px; }
.c6 { width: 79px; }
th { height: 37px; padding: 0 4px 0 7px; text-align: left; font-weight: 600; border-bottom: 1px solid #dee2e6; }
.th { display: flex; align-items: center; gap: 5px; white-space: nowrap; }
.th.drag { padding-left: 5px; }
.grow { flex: 1; }
.grow + .ic { margin-right: 5px; }
.grip { flex: none; width: 7px; height: 9px; fill: #495057; }
.mute { color: #adb5bd; }
.faint { color: #dee2e6; }
td { padding: 9px 8px; line-height: 16px; border-bottom: 1px solid #e3e6ea; vertical-align: middle; }
small { display: block; font-size: 9px; line-height: 15px; color: #868e96; }
.dim { color: #868e96; line-height: 17px; }
.name { display: flex; align-items: center; gap: 6px; font-weight: 500; }
.pref { padding: 0 7px; border-radius: 7px; background: #ffe0c2; color: #d9480f; font-size: 8px; line-height: 14px; font-weight: 700; }
.warn { color: #d9480f; font-size: 9px; line-height: 13px; margin-right: -8px; padding-bottom: 1px; }
.acts { display: flex; justify-content: flex-end; gap: 5px; margin: 0 1px 0 -8px; }
.act { display: grid; place-items: center; width: 27px; height: 27px; }
.go { background: #0b2c42; border-color: #0b2c42; color: #fff; }
.alert { background: #d9480f; border-color: #d9480f; }
.pager { display: flex; justify-content: flex-end; gap: 38px; padding: 8px 35px 8px 0; }
.size { width: 38px; height: 22px; }
.pg { width: 22px; height: 22px; background: #0b2c42; border: 0; }

.help-fab { position: fixed; right: 16px; bottom: 16px; display: flex; align-items: center; gap: 7px; height: 33px; padding: 0 18px 0 13px; border: 0; border-radius: 14px; background: #0b2c42; color: #fff; font-size: 13px; font-weight: 700; }
```
